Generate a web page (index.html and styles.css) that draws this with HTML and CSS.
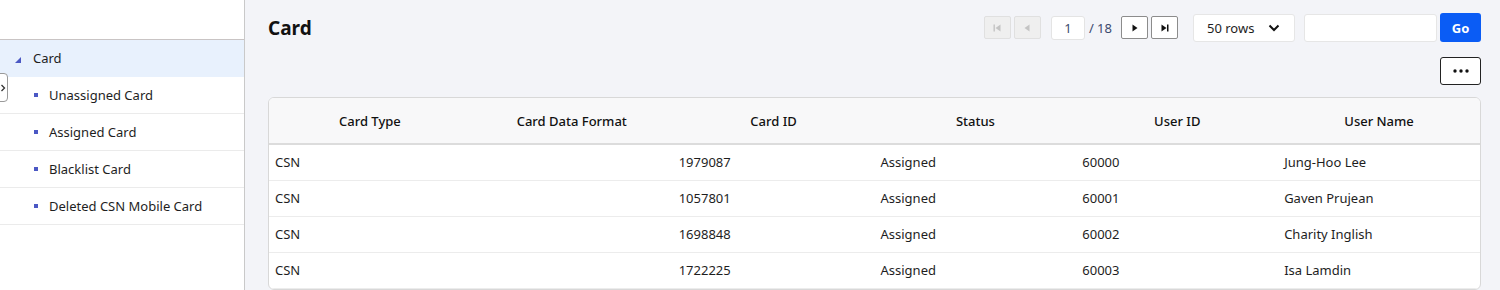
FILE: index.html
```html
<!DOCTYPE html>
<html lang="en">
<head>
  <meta charset="UTF-8">
  <title>Card</title>
  <link rel="stylesheet" href="styles.css">
</head>
<body>
  <div class="layout">
    <aside class="sidebar">
      <div class="sidebar-head"></div>
      <ul class="tree">
        <li class="tree-node active"><span class="caret"></span>Card</li>
        <li class="tree-leaf"><span class="dot"></span>Unassigned Card</li>
        <li class="tree-leaf"><span class="dot"></span>Assigned Card</li>
        <li class="tree-leaf"><span class="dot"></span>Blacklist Card</li>
        <li class="tree-leaf"><span class="dot"></span>Deleted CSN Mobile Card</li>
      </ul>
      <div class="collapse-tab">
        <svg width="6" height="8" viewBox="0 0 6 8"><path d="M1.5 1 L4.5 4 L1.5 7" fill="none" stroke="#333" stroke-width="1.3"/></svg>
      </div>
    </aside>

    <main class="main">
      <div class="toolbar">
        <h1>Card</h1>
        <div class="pager">
          <button class="pg-btn" disabled>
            <svg width="8" height="8" viewBox="0 0 8 8"><rect x="0.5" y="0.5" width="1.4" height="7" fill="#c4c4c4"/><path d="M7.5 0.5 L2.5 4 L7.5 7.5 Z" fill="#c4c4c4"/></svg>
          </button>
          <button class="pg-btn" disabled>
            <svg width="8" height="8" viewBox="0 0 8 8"><path d="M6.5 0.5 L1.5 4 L6.5 7.5 Z" fill="#c4c4c4"/></svg>
          </button>
          <input class="pg-input" type="text" value="1">
          <span class="pg-total">/ 18</span>
          <button class="pg-btn">
            <svg width="8" height="8" viewBox="0 0 8 8"><path d="M1.5 0.5 L6.5 4 L1.5 7.5 Z" fill="#111"/></svg>
          </button>
          <button class="pg-btn">
            <svg width="8" height="8" viewBox="0 0 8 8"><path d="M0.5 0.5 L5.5 4 L0.5 7.5 Z" fill="#111"/><rect x="6" y="0.5" width="1.5" height="7" fill="#111"/></svg>
          </button>
          <div class="rows-select">
            <span>50 rows</span>
            <svg width="12" height="8" viewBox="0 0 12 8"><path d="M1.5 1.5 L6 6 L10.5 1.5" fill="none" stroke="#111" stroke-width="2"/></svg>
          </div>
          <input class="search" type="text">
          <button class="go-btn">Go</button>
        </div>
      </div>

      <div class="actions">
        <button class="more-btn">
          <svg width="16" height="4" viewBox="0 0 16 4"><circle cx="2" cy="2" r="1.7" fill="#111"/><circle cx="8" cy="2" r="1.7" fill="#111"/><circle cx="14" cy="2" r="1.7" fill="#111"/></svg>
        </button>
      </div>

      <div class="grid">
        <table>
          <thead>
            <tr>
              <th>Card Type</th>
              <th>Card Data Format</th>
              <th>Card ID</th>
              <th>Status</th>
              <th>User ID</th>
              <th>User Name</th>
            </tr>
          </thead>
          <tbody>
            <tr><td>CSN</td><td></td><td>1979087</td><td>Assigned</td><td>60000</td><td>Jung-Hoo Lee</td></tr>
            <tr><td>CSN</td><td></td><td>1057801</td><td>Assigned</td><td>60001</td><td>Gaven Prujean</td></tr>
            <tr><td>CSN</td><td></td><td>1698848</td><td>Assigned</td><td>60002</td><td>Charity Inglish</td></tr>
            <tr><td>CSN</td><td></td><td>1722225</td><td>Assigned</td><td>60003</td><td>Isa Lamdin</td></tr>
          </tbody>
        </table>
      </div>
    </main>
  </div>
</body>
</html>
```

FILE: styles.css
```css
* {
  box-sizing: border-box;
}
body {
  margin: 0;
  font-family: "Noto Sans", "Open Sans", sans-serif;
  font-size: 13px;
  color: #1e1e1e;
  background: #f3f4f8;
  overflow: hidden;
}
.layout {
  display: flex;
  height: 290px;
}
.sidebar {
  position: relative;
  width: 245px;
  flex: none;
  background: #fff;
  border-right: 1px solid #c9c9c9;
}
.sidebar-head {
  height: 40px;
  border-bottom: 1px solid #c9c4c4;
}
.tree {
  list-style: none;
  margin: 0;
  padding: 0;
}
.tree li {
  display: flex;
  align-items: center;
  height: 37px;
  border-bottom: 1px solid #ebebeb;
}
.tree-node {
  padding-left: 15px;
}
.tree-node.active {
  background: #e8f1fd;
  border-bottom-color: #e8f1fd;
}
.caret {
  width: 0;
  height: 0;
  border-left: 6px solid transparent;
  border-bottom: 6px solid #4b58c4;
  margin-right: 12px;
  margin-top: 3px;
}
.tree-leaf {
  padding-left: 34px;
}
.dot {
  width: 4px;
  height: 4px;
  background: #4b58c4;
  margin-right: 11px;
}
.collapse-tab {
  position: absolute;
  left: -4px;
  top: 73px;
  width: 12px;
  height: 29px;
  background: #fff;
  border: 1px solid #9a9a9a;
  border-radius: 0 4px 4px 0;
  display: flex;
  align-items: center;
  justify-content: flex-end;
  padding-right: 1px;
}
.main {
  flex: 1;
  padding: 0 19px 0 23px;
}
.toolbar {
  display: flex;
  align-items: center;
  justify-content: space-between;
  height: 55px;
}
h1 {
  margin: 0;
  font-size: 19px;
  font-weight: 700;
  color: #111;
}
.pager {
  display: flex;
  align-items: center;
}
.pg-btn {
  width: 27px;
  height: 23px;
  margin-left: 3px;
  padding: 0;
  border: 1px solid #8c8c8c;
  border-radius: 2px;
  background: #fff;
  display: flex;
  align-items: center;
  justify-content: center;
}
.pg-btn:disabled {
  background: #efefef;
  border-color: #e0e0e0;
}
.pg-input {
  width: 34px;
  height: 24px;
  margin-left: 10px;
  border: 1px solid #e4e4e4;
  border-radius: 3px;
  background: #fff;
  text-align: center;
  font: inherit;
  color: #3c4a6e;
  padding: 0;
}
.pg-total {
  margin: 0 6px 0 4px;
  color: #3c4a6e;
}
.rows-select {
  width: 102px;
  height: 28px;
  margin-left: 15px;
  padding: 0 14px 0 13px;
  background: #fff;
  border: 1px solid #e6e6e6;
  border-radius: 3px;
  display: flex;
  align-items: center;
  justify-content: space-between;
}
.search {
  width: 133px;
  height: 28px;
  margin-left: 9px;
  background: #fff;
  border: 1px solid #e6e6e6;
  border-radius: 3px;
}
.go-btn {
  width: 41px;
  height: 29px;
  margin-left: 3px;
  border: none;
  border-radius: 3px;
  background: #0a5cf5;
  color: #fff;
  font: inherit;
  font-weight: 700;
}
.actions {
  display: flex;
  justify-content: flex-end;
  margin-top: 2px;
}
.more-btn {
  width: 41px;
  height: 28px;
  background: #fff;
  border: 1px solid #222;
  border-radius: 3px;
  padding: 0;
  display: flex;
  align-items: center;
  justify-content: center;
}
.grid {
  margin-top: 12px;
  background: #fff;
  border: 1px solid #d8d8d8;
  border-radius: 6px;
  overflow: hidden;
}
table {
  width: 100%;
  border-collapse: collapse;
  table-layout: fixed;
}
th {
  height: 46px;
  background: #f8f8f9;
  border-bottom: 2px solid #dcdcdc;
  font-weight: 500;
  text-align: center;
  color: #111;
}
td {
  height: 36px;
  padding: 0 6px;
  border-bottom: 1px solid #ececec;
}
```
